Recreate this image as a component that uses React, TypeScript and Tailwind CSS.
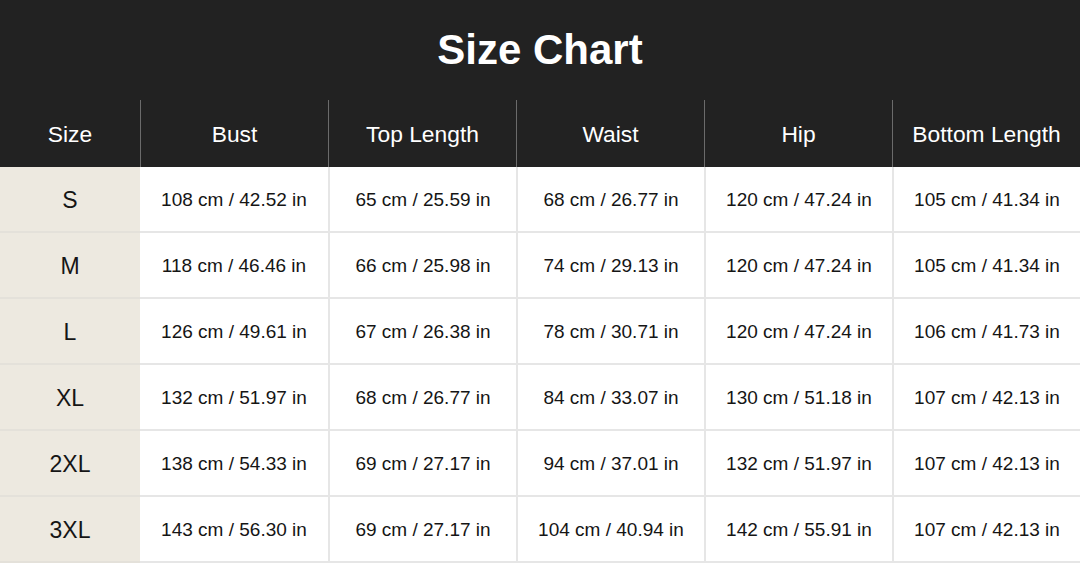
const headers = ["Size", "Bust", "Top Length", "Waist", "Hip", "Bottom Length"];

const rows: string[][] = [
  ["S", "108 cm / 42.52 in", "65 cm / 25.59 in", "68 cm / 26.77 in", "120 cm / 47.24 in", "105 cm / 41.34 in"],
  ["M", "118 cm / 46.46 in", "66 cm / 25.98 in", "74 cm / 29.13 in", "120 cm / 47.24 in", "105 cm / 41.34 in"],
  ["L", "126 cm / 49.61 in", "67 cm / 26.38 in", "78 cm / 30.71 in", "120 cm / 47.24 in", "106 cm / 41.73 in"],
  ["XL", "132 cm / 51.97 in", "68 cm / 26.77 in", "84 cm / 33.07 in", "130 cm / 51.18 in", "107 cm / 42.13 in"],
  ["2XL", "138 cm / 54.33 in", "69 cm / 27.17 in", "94 cm / 37.01 in", "132 cm / 51.97 in", "107 cm / 42.13 in"],
  ["3XL", "143 cm / 56.30 in", "69 cm / 27.17 in", "104 cm / 40.94 in", "142 cm / 55.91 in", "107 cm / 42.13 in"],
];

export default function App() {
  return (
    <div className="h-[564px] w-[1080px] overflow-hidden bg-white font-['Liberation_Sans',Arial,sans-serif]">
      <div className="flex h-[100px] items-center justify-center bg-[#222222]">
        <h1 className="text-[42px] font-bold leading-none text-white">Size Chart</h1>
      </div>
      <div className="grid grid-cols-[140px_repeat(5,188px)]">
        {headers.map((h, i) => (
          <div
            key={h}
            className={
              "flex h-[67px] items-center justify-center bg-[#222222] pt-[2px] text-[22.8px] text-white" +
              (i > 0 ? " border-l border-[#6b6b6b]" : "")
            }
          >
            {h}
          </div>
        ))}
        {rows.map((row) =>
          row.map((cell, i) =>
            i === 0 ? (
              <div
                key={row[0] + i}
                className="flex h-[66px] items-center justify-center border-b-2 border-[#e4e1da] bg-[#ede9e0] pt-[3px] text-[23px] text-[#151515]"
              >
                {cell}
              </div>
            ) : (
              <div
                key={row[0] + i}
                className={
                  "flex h-[66px] items-center justify-center border-b-2 border-[#e6e6e6] pt-[3px] text-[19px] text-[#151515]" +
                  (i > 1 ? " border-l-2" : "")
                }
              >
                {cell}
              </div>
            )
          )
        )}
      </div>
    </div>
  );
}
